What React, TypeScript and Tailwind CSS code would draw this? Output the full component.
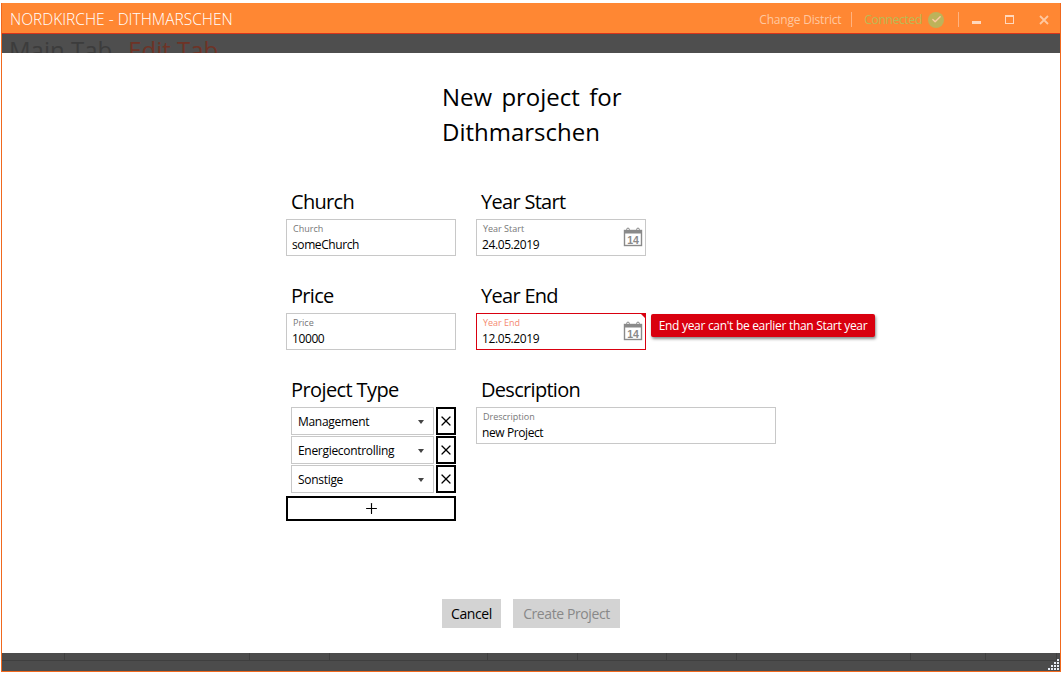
import React from 'react';
import { Check, Plus, X } from 'lucide-react';

const font = "font-['Open_Sans','Noto_Sans',sans-serif]";

const Calendar = () => (
  <svg width="20" height="20" viewBox="0 0 20 20" className="-mt-[2px] ml-auto shrink-0 self-center text-[#8a8a8a]">
    <rect x="1.5" y="3.5" width="17" height="15" fill="none" stroke="currentColor" strokeWidth="1.4" />
    <rect x="1" y="3" width="18" height="3.5" fill="currentColor" />
    <circle cx="5" cy="2.5" r="1.4" fill="none" stroke="currentColor" />
    <circle cx="15" cy="2.5" r="1.4" fill="none" stroke="currentColor" />
    <text x="10" y="16.5" textAnchor="middle" fontSize="10.5" fontWeight="700" fill="currentColor" fontFamily="Liberation Sans">14</text>
  </svg>
);

const Field = ({ label, hint, value, error, icon, wide }: { label: string; hint?: string; value: string; error?: boolean; icon?: boolean; wide?: boolean }) => (
  <div className={wide ? 'w-[300px]' : 'w-[170px]'}>
    <h2 className="ml-[5px] h-[31px] text-[20px] leading-[28px] tracking-[-0.7px] text-black">{label}</h2>
    <div className={`relative flex h-[37px] items-start justify-between border pl-[5px] pr-[2px] ${error ? 'border-[#d9000f]' : 'border-[#c8c8c8]'}`}>
      <div className="flex flex-col pt-[3px]">
        <span className={`ml-px text-[9px] leading-[12px] ${error ? 'text-[#f58a70]' : 'text-[#777777]'}`}>{hint ?? label}</span>
        <span className="text-[12px] leading-[20px] tracking-[-0.4px] text-black">{value}</span>
      </div>
      {icon && <Calendar />}
      {error && <div className="absolute -right-px -top-px size-0 border-l-[6px] border-t-[6px] border-l-transparent border-t-[#d9000f]" />}
    </div>
  </div>
);

const TypeRow = ({ name }: { name: string }) => (
  <div className="flex h-[28px] gap-[2px]">
    <div className="flex w-[143px] items-center justify-between border border-[#c8c8c8] pl-[6px] pr-[9px] pt-[2px] text-[12px] tracking-[-0.3px] text-black">
      {name}
      <span className="size-0 border-x-[3px] border-t-[4px] border-x-transparent border-t-[#444444]" />
    </div>
    <button className="flex w-[20px] items-center justify-center border-2 border-black">
      <X size={20} strokeWidth={1.8} />
    </button>
  </div>
);

// column widths of the grid header hidden behind the dialog
const footerCols = [63, 185, 80, 158, 90, 89, 70, 174, 75, 71];

const App = () => {
  return (
    <div className={`h-[674px] w-[1064px] overflow-hidden bg-white pt-[3px] ${font}`}>
      <div className="mx-px flex h-[669px] w-[1060px] flex-col border-x border-b border-[#f0691e]">
        <header className="flex h-[31px] shrink-0 items-center justify-between border-b border-[#d8341a] bg-[#ff8733] pl-[8px] pr-[11px] pt-[3px] text-white">
          <span className="text-[15.5px] font-light">NORDKIRCHE - DITHMARSCHEN</span>
          <div className="flex items-center text-[12px] tracking-[-0.2px]">
            <span className="text-[#ffc8a0]">Change District</span>
            <span className="mx-[10px] h-[15px] w-px bg-[#ffb380]" />
            <span className="ml-[2px] mr-[6px] tracking-[-0.3px] text-[#b9bb55]">Connected</span>
            <span className="flex size-[16px] items-center justify-center rounded-full bg-[#bdb35a]">
              <Check size={11} strokeWidth={3} className="text-[#ffc8a0]" />
            </span>
            <span className="ml-[14px] mr-[13px] h-[15px] w-px bg-[#ffb380]" />
            <span className="mt-[6px] h-[3px] w-[9px] bg-[#ffd8bd]" />
            <span className="ml-[24px] h-[9px] w-[9px] border border-t-2 border-[#ffd8bd]" />
            <svg width="10" height="10" viewBox="0 0 10 10" className="ml-[25px] text-[#ffc8a0]">
              <path d="M1 1L9 9M9 1L1 9" stroke="currentColor" strokeWidth="1.8" fill="none" />
            </svg>
          </div>
        </header>
        <div className="h-[19px] shrink-0 overflow-hidden bg-[#4e4e4e] pl-[7px] text-[24px] leading-[32px]">
          <span className="text-[#3c3c3c]">Main Tab</span>
          <span className="ml-[16px] text-[#6e3326]">Edit Tab</span>
        </div>

        <main className="flex-1 bg-white">
          <h1 className="ml-[440px] mt-[26px] w-[220px] text-[24px] leading-[35px] text-black [word-spacing:3px]">New project for Dithmarschen</h1>
          <div className="ml-[284px] mt-[39px] flex gap-[20px]">
            <div className="flex w-[170px] flex-col">
              <Field label="Church" value="someChurch" />
              <div className="mt-[26px]">
                <Field label="Price" value="10000" />
              </div>
              <h2 className="ml-[5px] mt-[26px] h-[31px] text-[20px] leading-[28px] tracking-[-0.6px] text-black">Project Type</h2>
              <div className="ml-[5px] flex flex-col gap-px">
                <TypeRow name="Management" />
                <TypeRow name="Energiecontrolling" />
                <TypeRow name="Sonstige" />
              </div>
              <button className="mt-[3px] flex h-[25px] items-center justify-center border-2 border-black">
                <Plus size={17} strokeWidth={1.6} />
              </button>
            </div>
            <div className="flex flex-col">
              <Field label="Year Start" value="24.05.2019" icon />
              <div className="relative mt-[26px]">
                <Field label="Year End" value="12.05.2019" icon error />
                <div className="absolute left-[175px] top-[32px] flex h-[23px] w-[224px] items-center justify-center whitespace-nowrap rounded-[2px] bg-[#d9000f] text-[12px] tracking-[-0.3px] text-white shadow-[1px_2px_3px_rgba(0,0,0,0.45)]">
                  End year can't be earlier than Start year
                </div>
              </div>
              <div className="mt-[26px]">
                <Field label="Description" hint="Drescription" value="new Project" wide />
              </div>
            </div>
          </div>
          <div className="ml-[440px] mt-[78px] flex gap-[12px] text-[14px] tracking-[-0.4px]">
            <button className="h-[29px] w-[59px] bg-[#d3d3d3] text-black">Cancel</button>
            <button className="h-[29px] w-[107px] bg-[#d3d3d3] text-[#888888]">Create Project</button>
          </div>
        </main>

        <footer className="relative h-[18px] shrink-0 bg-[#4c4c4c]">
          <div className="flex h-[8px] border-b border-[#3f3f3f]">
            {footerCols.map((w, i) => (
              <div key={i} className="border-r border-[#3f3f3f]" style={{ width: w }} />
            ))}
          </div>
          <svg width="12" height="12" viewBox="0 0 12 12" className="absolute bottom-0 right-0 fill-[#e8edf5]">
            <rect x="9" y="0" width="2" height="2" />
            <rect x="6" y="3" width="2" height="2" />
            <rect x="9" y="3" width="2" height="2" />
            <rect x="3" y="6" width="2" height="2" />
            <rect x="6" y="6" width="2" height="2" />
            <rect x="9" y="6" width="2" height="2" />
            <rect x="0" y="9" width="2" height="2" />
            <rect x="3" y="9" width="2" height="2" />
            <rect x="6" y="9" width="2" height="2" />
            <rect x="9" y="9" width="2" height="2" />
          </svg>
        </footer>
      </div>
    </div>
  );
};

export default App;
